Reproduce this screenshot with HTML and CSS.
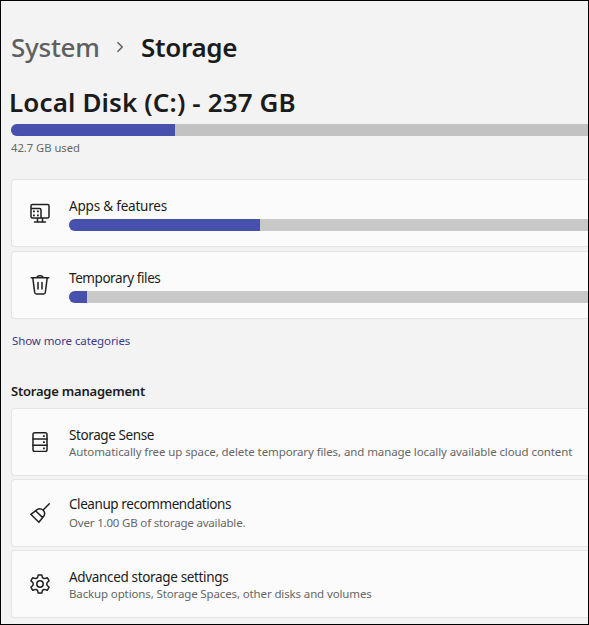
FILE: index.html
```html
<!DOCTYPE html>
<html lang="en">
<head>
<meta charset="utf-8">
<title>Storage</title>
<link rel="stylesheet" href="styles.css">
</head>
<body>
<main class="window">
  <nav class="crumbs">
    <span class="crumb parent">System</span>
    <svg class="chevron" width="10" height="14" viewBox="0 0 10 14"><path d="M2.5 2.2 7.2 7 2.5 11.8"/></svg>
    <span class="crumb current">Storage</span>
  </nav>
  <h1 class="disk">Local Disk (C:) - 237 GB</h1>
  <div class="bar total"><div class="fill" style="width:164px"></div></div>
  <p class="used">42.7 GB used</p>

  <section class="cards usage">
    <article class="card">
      <svg class="icon" viewBox="0 0 20 20"><path d="M1 5.500V3Q1 1.500 2.500 1.500h15Q19 1.500 19 3v10.500Q19 15 17.500 15H2.500Q1 15 1 13.500V5.500h8.500Q11 5.500 11 7V15M7.500 15V18.500M12.500 15V18.500M4.500 19h11"/><path class="dots" d="M3 7.500h1.800v1.800H3zM7 7.500h1.800v1.800H7zM3 11.500h1.800v1.800H3zM7 11.500h1.800v1.800H7z"/></svg>
      <div class="body">
        <h3 class="name apps">Apps &amp; features</h3>
        <div class="bar"><div class="fill" style="width:191px"></div></div>
      </div>
    </article>
    <article class="card">
      <svg class="icon" viewBox="0 0 20 20"><path d="M1.200 2.800h17.600M7 2.600Q7 .8 10 .8T13 2.600M2.800 3l1.900 14.500q.2 1.500 1.600 1.500h7.400q1.400 0 1.600-1.500L17.200 3M8 7.500v6.500M12 7.500v6.500"/></svg>
      <div class="body">
        <h3 class="name temp">Temporary files</h3>
        <div class="bar"><div class="fill" style="width:18px"></div></div>
      </div>
    </article>
  </section>
  <a class="more">Show more categories</a>

  <h2 class="heading">Storage management</h2>
  <section class="cards manage">
    <article class="card">
      <svg class="icon" viewBox="0 0 20 20"><rect x="3" y=".8" width="14" height="18.700" rx="1.800"/><path d="M3 7h14M3 13.300h14"/><path class="dots" d="M13 3.200h1.800V5H13zM13 9.300h1.800v1.800H13zM13 15.500h1.800v1.800H13z"/></svg>
      <div class="body">
        <h3 class="name sense">Storage Sense</h3>
        <p class="desc auto">Automatically free up space, delete temporary files, and manage locally available cloud content</p>
      </div>
    </article>
    <article class="card cleanup-card">
      <svg class="icon" viewBox="0 0 20 20"><path d="M19.300.8 13.300 6.800M5.500 7.800Q9.500 4 13 7 16.500 10.500 12.700 14.600L8.900 19.200.8 11.300ZM5.500 7.800 12.700 14.600"/></svg>
      <div class="body">
        <h3 class="name cleanup">Cleanup recommendations</h3>
        <p class="desc over">Over 1.00 GB of storage available.</p>
      </div>
    </article>
    <article class="card">
      <svg class="icon" viewBox="0 0 20 20"><circle cx="10" cy="10" r="3.200"/><path d="M8.200.9h3.600l.6 2.700q1.200 1.100 2.700.8l2.200-.7 1.800 3.100-1.900 1.700q-.7 1.500 0 3l1.900 1.700-1.800 3.100-2.200-.7q-1.500-.3-2.700.8l-.6 2.700H8.200l-.6-2.700q-1.200-1.100-2.700-.8l-2.200.7L.9 13.200l1.900-1.700q.7-1.500 0-3L.9 6.800l1.800-3.100 2.200.7q1.500.3 2.700-.8Z"/></svg>
      <div class="body">
        <h3 class="name advanced">Advanced storage settings</h3>
        <p class="desc backup">Backup options, Storage Spaces, other disks and volumes</p>
      </div>
    </article>
  </section>
</main>
</body>
</html>
```
FILE: styles.css
```css
* { box-sizing: border-box; margin: 0; }
body {
  height: 625px;
  overflow: hidden;
  font-family: "Noto Sans", "Open Sans", sans-serif;
  color: #1b1b1b;
}
.window {
  height: 625px;
  overflow: hidden;
  border: 1px solid #000;
  background: #f3f3f3;
  padding: 28px 0 0 10px;
  white-space: nowrap;
}
.crumbs { display: flex; align-items: center; height: 36px; }
.crumb { font-size: 26px; line-height: 36px; font-weight: 600; letter-spacing: -.3px; }
.parent { width: 104px; color: #5f5f5f; font-weight: 500; letter-spacing: -.25px; }
.chevron { width: 10px; height: 14px; margin-right: 16px; fill: none; stroke: #5f5f5f; stroke-width: 1.5; }
.disk { margin: 19px 0 0 -2px; font-size: 26px; line-height: 36px; font-weight: 600; letter-spacing: .13px; }
.bar { height: 12px; background: #c8c8c8; border-radius: 6px 0 0 6px; overflow: hidden; }
.fill { height: 100%; background: #4850ae; }
.total { margin-top: 4px; background: #c2c2c2; }
.used { margin-top: 4px; font-size: 11.2px; line-height: 16px; color: #666; }
.cards { display: flex; flex-direction: column; gap: 4px; }
.usage { margin-top: 23px; }
.manage { margin-top: 7px; gap: 3px; }
.card {
  display: flex;
  height: 68px;
  border: 1px solid #e5e5e5;
  border-right: 0;
  border-radius: 4px 0 0 4px;
  background: #fbfbfb;
}
.icon {
  width: 20px;
  height: 20px;
  margin: 23px 19.5px 0 17.5px;
  flex: none;
  fill: none;
  stroke: #202020;
  stroke-width: 1.5;
  stroke-linejoin: round;
  stroke-linecap: round;
}
.icon .dots { fill: #202020; stroke: none; }
.body { flex: 1; min-width: 0; padding-top: 16px; }
.cleanup-card .body { padding-top: 14px; }
.name { font-size: 13.5px; line-height: 20px; font-weight: 400; }
.apps { letter-spacing: -.2px; }
.temp { letter-spacing: -.43px; }
.sense { letter-spacing: -.4px; }
.cleanup { letter-spacing: -.42px; }
.advanced { letter-spacing: -.34px; }
.usage .bar { margin-top: 3px; }
.desc { margin-top: -1px; font-size: 11.5px; line-height: 16px; color: #666; }
.auto { letter-spacing: -.095px; }
.over { margin-top: 1px; letter-spacing: -.18px; }
.backup { letter-spacing: -.13px; }
.more { display: block; margin: 13px 0 0 1px; font-size: 11.5px; line-height: 18px; letter-spacing: -.1px; color: #373d86; }
.heading { margin-top: 31px; font-size: 13px; line-height: 20px; font-weight: 600; letter-spacing: -.22px; }
```
